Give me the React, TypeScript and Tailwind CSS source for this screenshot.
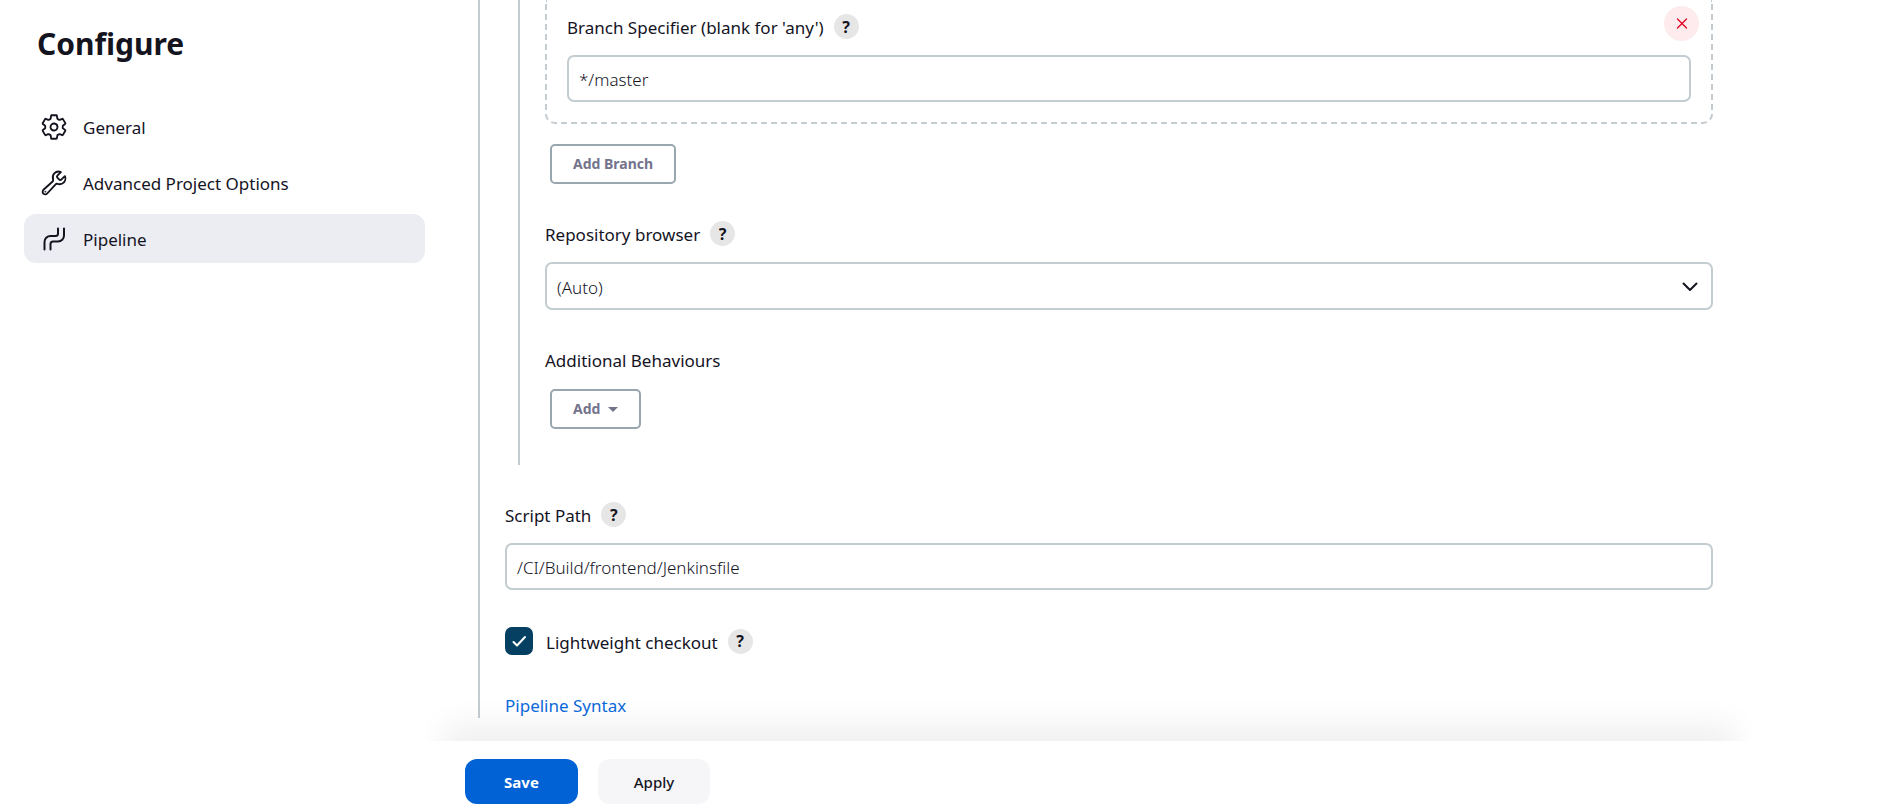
import React from "react";

const nav = [
  { label: "General", icon: GearIcon, active: false },
  { label: "Advanced Project Options", icon: WrenchIcon, active: false },
  { label: "Pipeline", icon: PipelineIcon, active: true },
];

function GearIcon() {
  return (
    <svg viewBox="0 0 512 512" className="size-7" fill="none" stroke="currentColor" strokeWidth="34" strokeLinecap="round" strokeLinejoin="round" aria-hidden="true">
      <path d="M262.29 192.31a64 64 0 1057.4 57.4 64.13 64.13 0 00-57.4-57.4zM416.39 256a154.34 154.34 0 01-1.53 20.79l45.21 35.46a10.81 10.81 0 012.45 13.75l-42.77 74a10.81 10.81 0 01-13.14 4.59l-44.9-18.08a16.11 16.11 0 00-15.17 1.75A164.48 164.48 0 01325 400.8a15.94 15.94 0 00-8.82 12.14l-6.73 47.89a11.08 11.08 0 01-10.68 9.17h-85.54a11.11 11.11 0 01-10.69-8.87l-6.72-47.82a16.07 16.07 0 00-9-12.22 155.3 155.3 0 01-21.46-12.57 16 16 0 00-15.11-1.71l-44.89 18.07a10.81 10.81 0 01-13.14-4.58l-42.77-74a10.8 10.8 0 012.45-13.75l38.21-30a16.05 16.05 0 006-14.08c-.36-4.17-.58-8.33-.58-12.5s.21-8.27.58-12.35a16 16 0 00-6.07-13.94l-38.19-30A10.81 10.81 0 0149.48 186l42.77-74a10.81 10.81 0 0113.14-4.59l44.9 18.08a16.11 16.11 0 0015.17-1.75A164.48 164.48 0 01187 111.2a15.94 15.94 0 008.82-12.14l6.73-47.89A11.08 11.08 0 01213.23 42h85.54a11.11 11.11 0 0110.69 8.87l6.72 47.82a16.07 16.07 0 009 12.22 155.3 155.3 0 0121.46 12.57 16 16 0 0015.11 1.71l44.89-18.07a10.81 10.81 0 0113.14 4.58l42.77 74a10.8 10.8 0 01-2.45 13.75l-38.21 30a16.05 16.05 0 00-6.05 14.08c.33 4.14.55 8.3.55 12.47z" />
    </svg>
  );
}

function WrenchIcon() {
  return (
    <svg viewBox="0 0 512 512" className="size-7" fill="none" stroke="currentColor" strokeWidth="34" strokeLinecap="round" strokeLinejoin="round" aria-hidden="true">
      <path strokeMiterlimit="10" d="M393.87 190a32.1 32.1 0 01-45.25 0l-26.57-26.57a32.09 32.09 0 010-45.26L382.19 58a1 1 0 00-.3-1.64c-38.82-16.64-89.15-8.16-121.11 23.57-30.58 30.35-32.32 76-21.12 115.84a31.93 31.93 0 01-9.06 32.08L64 380a48.17 48.17 0 1068 68l153.86-167a31.93 31.93 0 0131.6-9.13c39.54 10.59 84.54 8.6 114.72-21.19 32.49-32 39.5-88.56 23.75-120.93a1 1 0 00-1.6-.26z" />
      <circle cx="96" cy="416" r="10" fill="currentColor" strokeWidth="10" />
    </svg>
  );
}

function PipelineIcon() {
  return (
    <svg viewBox="0 0 28 28" className="size-7" fill="none" stroke="currentColor" strokeWidth="2" strokeLinecap="round" aria-hidden="true">
      <path d="M4.500 24.500V17a6 6 0 0 1 6-6H15.500a2.500 2.500 0 0 0 2.500-2.500V3.500" />
      <path d="M10.500 24.500V19a2.500 2.500 0 0 1 2.500-2.500H18a6 6 0 0 0 6-6V3.500" />
    </svg>
  );
}

function Help({ topic }: { topic: string }) {
  return (
    <button type="button" aria-label={`Help for feature: ${topic}`} className="flex size-[25px] shrink-0 items-center justify-center rounded-full bg-[#e6e6e6] text-base leading-none font-bold">
      ?
    </button>
  );
}

const field = "w-full rounded-[7px] border-2 border-[#c3ccd1] bg-white px-2.5 pt-0.5 font-light outline-none";
const labelRow = "mb-4 flex h-[25px] items-center gap-2.5";
const outlineButton = "flex h-10 items-center rounded-[5px] border-2 border-[#98a6b0] px-[21px] text-sm font-bold text-[#73738c]";

export default function App() {
  return (
    <div className="flex min-h-screen bg-white font-['Noto_Sans','Segoe_UI',sans-serif] text-[17px] leading-[25px] text-[#14141f]">
      <aside className="w-[425px] shrink-0 pl-6">
        <h1 className="pt-6 pl-[13px] text-[30px] leading-10 font-bold">Configure</h1>
        <nav className="mt-[38px] flex flex-col gap-[7px]">
          {nav.map(({ label, icon: Icon, active }) => (
            <a
              key={label}
              href="#"
              aria-current={active ? "page" : undefined}
              className={`flex h-[49px] items-center gap-[15px] rounded-xl px-4 ${active ? "bg-[#ecedf3]" : ""}`}
            >
              <Icon />
              <span className="pt-px">{label}</span>
            </a>
          ))}
        </nav>
      </aside>

      <main className="flex min-w-0 flex-1 flex-col">
        <form className="flex flex-1 flex-col" onSubmit={(e) => e.preventDefault()}>
          <div className="mr-[178px] mb-[23px] ml-[53px] border-l-2 border-[#c3ccd1] pl-[25px]">
            <section className="ml-[13px] border-l-2 border-[#c3ccd1] pb-9 pl-[25px]">
              <div className="relative rounded-b-[10px] border-2 border-t-0 border-dashed border-[#c3ccd1] px-5 pt-3.5 pb-5">
                <button type="button" aria-label="Delete branch" className="absolute top-1.5 right-3 flex size-[35px] items-center justify-center rounded-full bg-[#fdebed] text-[#e6001f]">
                  <svg viewBox="0 0 12 12" className="size-3" fill="none" stroke="currentColor" strokeWidth="1.300" strokeLinecap="round" aria-hidden="true">
                    <path d="M1.500 1l9 9M10.500 1l-9 9" />
                  </svg>
                </button>
                <div className={labelRow}>
                  <label htmlFor="branch" className="pt-0.5">Branch Specifier (blank for 'any')</label>
                  <Help topic="Branch Specifier" />
                </div>
                <input id="branch" type="text" defaultValue="*/master" className={`${field} block h-[47px]`} />
              </div>
              <button type="button" className={`${outlineButton} mt-5 ml-[5px]`}>
                Add Branch
              </button>

              <div className={`${labelRow} mt-[37px]`}>
                <label htmlFor="browser" className="pt-0.5">Repository browser</label>
                <Help topic="Repository browser" />
              </div>
              <div className="relative">
                <select id="browser" className={`${field} block h-12 appearance-none`}>
                  <option>(Auto)</option>
                </select>
                <svg viewBox="0 0 16 10" className="pointer-events-none absolute top-5 right-[15px] h-2.5 w-4" fill="none" stroke="currentColor" strokeWidth="2" strokeLinecap="round" strokeLinejoin="round" aria-hidden="true">
                  <path d="M1.500 1.500L8 8l6.500-6.500" />
                </svg>
              </div>

              <h2 className="mt-[38px] mb-4">Additional Behaviours</h2>
              <button type="button" className={`${outlineButton} ml-[5px] gap-2`}>
                Add
                <svg viewBox="0 0 10 5" className="h-[5px] w-2.5" fill="currentColor" aria-hidden="true">
                  <path d="M0 0h10L5 5z" />
                </svg>
              </button>
            </section>

            <div className={`${labelRow} mt-[37px]`}>
              <label htmlFor="script" className="pt-0.5">Script Path</label>
              <Help topic="Script Path" />
            </div>
            <input id="script" type="text" defaultValue="/CI/Build/frontend/Jenkinsfile" className={`${field} block h-[47px]`} />

            <div className="mt-[37px] flex h-7 items-center">
              <span className="relative flex size-7">
                <input id="light" type="checkbox" defaultChecked className="size-7 appearance-none rounded-[7px] border-2 border-[#c3ccd1] checked:border-[#053f61] checked:bg-[#053f61]" />
                <svg viewBox="0 0 28 28" className="pointer-events-none absolute inset-0" fill="none" stroke="white" strokeWidth="2" strokeLinecap="round" strokeLinejoin="round" aria-hidden="true">
                  <path d="M8.500 15l3.500 3.500L20 10" />
                </svg>
              </span>
              <label htmlFor="light" className="mr-2.5 ml-[13px] pt-0.5">Lightweight checkout</label>
              <Help topic="Lightweight checkout" />
            </div>

            <a href="#" className="mt-[38px] block w-fit text-[#0b6adb]">
              Pipeline Syntax
            </a>
          </div>

          <footer className="sticky bottom-0 mt-auto mr-[138px] bg-white pt-[18px] pr-10 pb-1.5 pl-10">
            <div className="pointer-events-none absolute inset-x-0 bottom-full h-[41px] overflow-hidden px-[18px] pt-[41px]">
              <div className="h-20 shadow-[0_-18px_30px_rgba(0,0,0,0.06)]" />
            </div>
            <div className="flex gap-5 text-[15px]">
              <button type="submit" className="h-[45px] w-[113px] rounded-xl bg-[#0062d4] pt-0.5 font-bold text-white">
                Save
              </button>
              <button type="button" className="h-[45px] w-28 rounded-xl bg-[#f6f6f9] pt-0.5 font-medium">
                Apply
              </button>
            </div>
          </footer>
        </form>
      </main>
    </div>
  );
}
